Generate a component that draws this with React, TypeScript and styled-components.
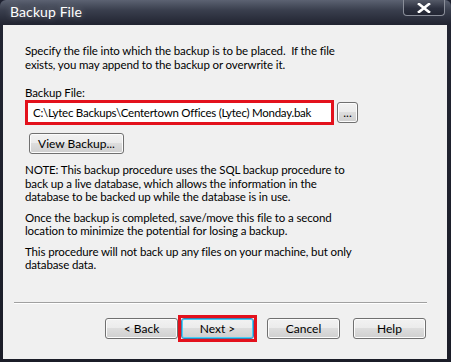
import React from 'react'
import styled, { createGlobalStyle } from 'styled-components'

const GlobalStyle = createGlobalStyle`
  html, body {
    margin: 0;
    padding: 0;
    background: #1e2130;
  }
  body {
    font-family: Lato, 'DejaVu Sans', sans-serif;
  }
`

const Window = styled.div`
  width: 451px;
  height: 362px;
  display: flex;
  flex-direction: column;
  box-sizing: border-box;
  background: linear-gradient(180deg, #5c6272 0px, #3a3f4e 10px, #222532 24px, #1b1d28 100%);
  border-radius: 6px 6px 0 0;
  padding: 0 4px 3px 3px;
  overflow: hidden;
`

const TitleBar = styled.div`
  height: 25px;
  flex-shrink: 0;
  display: flex;
  align-items: center;
  justify-content: space-between;
  padding-left: 7px;
`

const Title = styled.div`
  color: #ffffff;
  font-size: 14px;
  letter-spacing: 0.1px;
  margin-top: -2px;
  text-shadow: 0 0 6px rgba(255, 255, 255, 0.35);
`

const CloseButton = styled.div`
  align-self: flex-start;
  width: 42px;
  height: 16px;
  box-sizing: border-box;
  margin-right: 2px;
  border: 1px solid #8a8e99;
  border-top: none;
  border-radius: 0 0 4px 4px;
  background: linear-gradient(180deg, #555a68 0%, #2d3140 55%, #232633 100%);
  display: flex;
  align-items: center;
  justify-content: center;
`

const Client = styled.div`
  flex: 1;
  min-height: 0;
  background: #f0f0f0;
  display: flex;
  flex-direction: column;
  padding: 0 0 0 22px;
  font-size: 11.5px;
  letter-spacing: -0.12px;
  color: #000;
`

const Para = styled.p<{ top?: number }>`
  margin: ${({ top }) => top ?? 0}px 0 0 0;
  line-height: 13.5px;
  white-space: nowrap;
`

const Label = styled.div`
  margin-top: 15px;
  line-height: 13px;
`

const FieldRow = styled.div`
  display: flex;
  align-items: center;
  margin-top: 1px;
  gap: 3px;
`

const Highlight = styled.div`
  border: 3px solid #e3111c;
  box-sizing: border-box;
`

const PathField = styled(Highlight)`
  width: 309px;
  height: 25px;
  background: #ffffff;
  padding-left: 5px;
  display: flex;
  align-items: center;
  white-space: nowrap;
  overflow: hidden;
  font-size: 11.5px;
  letter-spacing: -0.25px;
`

const Button = styled.div<{ w: number; focused?: boolean; gapLeft?: number }>`
  width: ${({ w }) => w}px;
  height: 21px;
  margin-left: ${({ gapLeft }) => gapLeft ?? 0}px;
  box-sizing: border-box;
  border: 1px solid ${({ focused }) => (focused ? '#3c7fb1' : '#707070')};
  border-radius: 3px;
  background: linear-gradient(180deg, #f2f2f2 0%, #ebebeb 49%, #dddddd 50%, #cfcfcf 100%);
  box-shadow: inset 0 0 0 1px ${({ focused }) => (focused ? '#48d0f8' : '#fcfcfc')};
  display: flex;
  align-items: center;
  justify-content: center;
  font-size: 12px;
  letter-spacing: 0;
  color: #000;
  flex-shrink: 0;
`

const ViewRow = styled.div`
  margin: 8px 0 0 4px;
`

const Spacer = styled.div`
  flex: 1;
`

const Separator = styled.div`
  height: 1px;
  background: #a0a0a0;
  border-bottom: 1px solid #ffffff;
  margin: 0 20px 0 -11px;
`

const ButtonBar = styled.div`
  display: flex;
  align-items: center;
  justify-content: flex-end;
  padding: 11px 21px 17px 0;
`

const NextBox = styled(Highlight)`
  margin: 0 10px 0 0;
  display: flex;
`

export default function App() {
  return (
    <>
      <GlobalStyle />
      <Window>
        <TitleBar>
          <Title>Backup File</Title>
          <CloseButton>
            <svg width="14" height="10" viewBox="0 0 14 10">
              <path d="M2 1 L12 9 M12 1 L2 9" stroke="#ffffff" strokeWidth="2.6" strokeLinecap="square" />
            </svg>
          </CloseButton>
        </TitleBar>
        <Client>
          <Para top={19}>
            Specify the file into which the backup is to be placed.&nbsp; If the file
            <br />
            exists, you may append to the backup or overwrite it.
          </Para>
          <Label>Backup File:</Label>
          <FieldRow>
            <PathField>C:\Lytec Backups\Centertown Offices (Lytec) Monday.bak</PathField>
            <Button w={21}>...</Button>
          </FieldRow>
          <ViewRow>
            <Button w={95}>View Backup...</Button>
          </ViewRow>
          <Para top={9}>
            NOTE: This backup procedure uses the SQL backup procedure to
            <br />
            back up a live database, which allows the information in the
            <br />
            database to be backed up while the database is in use.
          </Para>
          <Para top={7}>
            Once the backup is completed, save/move this file to a second
            <br />
            location to minimize the potential for losing a backup.
          </Para>
          <Para top={7}>
            This procedure will not back up any files on your machine, but only
            <br />
            database data.
          </Para>
          <Spacer />
          <Separator />
          <ButtonBar>
            <Button w={73}>&lt; Back</Button>
            <NextBox>
              <Button w={73} focused>
                Next &gt;
              </Button>
            </NextBox>
            <Button w={73}>Cancel</Button>
            <Button w={73} gapLeft={13}>
              Help
            </Button>
          </ButtonBar>
        </Client>
      </Window>
    </>
  )
}
